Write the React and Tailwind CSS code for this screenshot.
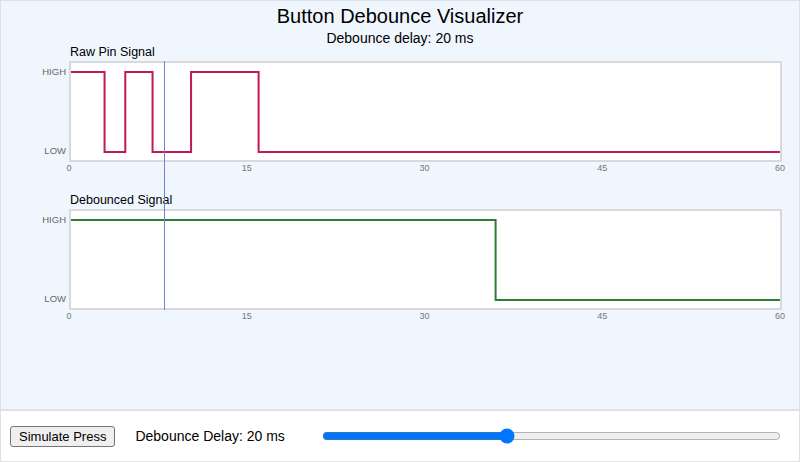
import { useState } from "react";

const PLOT_W = 711;
const PLOT_H = 101;
const HIGH_Y = 11;
const LOW_Y = 91;
const MAX_T = 60;

const toX = (t) => (t / MAX_T) * PLOT_W;

// raw pin edges (time in ms, level 1 = HIGH)
const rawEdges = [
  [0, 1],
  [3, 0],
  [4.75, 1],
  [7.05, 0],
  [10.3, 1],
  [16, 0],
];

const debouncedEdges = [
  [0, 1],
  [36, 0],
];

function stepPath(edges) {
  let d = "";
  let prevY = null;
  edges.forEach(([t, lvl], i) => {
    const x = toX(t);
    const y = lvl ? HIGH_Y : LOW_Y;
    if (i === 0) d += `M ${x} ${y}`;
    else d += ` L ${x} ${prevY} L ${x} ${y}`;
    prevY = y;
  });
  d += ` L ${PLOT_W} ${prevY}`;
  return d;
}

function SignalChart({ title, edges, color, className = "" }) {
  const ticks = [0, 15, 30, 45, 60];
  return (
    <div className={className}>
      <div className="pl-[70px] text-[12.5px] leading-[14px] h-[14px] text-black">
        {title}
      </div>
      <div className="flex mt-[2px]">
        <div className="w-[69px] h-[101px] flex flex-col justify-between items-end pr-[3px] py-[5px] text-[9.5px] leading-[12px] text-[#666]">
          <span>HIGH</span>
          <span>LOW</span>
        </div>
        <div className="w-[713px] h-[101px] bg-white border-2 border-[#d9d9dc] relative overflow-hidden">
          <svg
            width={PLOT_W}
            height={PLOT_H}
            className="absolute left-[-2px] top-[-2px]"
          >
            <path d={stepPath(edges)} fill="none" stroke={color} strokeWidth="2" />
          </svg>
        </div>
      </div>
      <div className="ml-[69px] w-[711px] h-[12px] flex justify-between text-[9px] leading-[12px] text-[#777]">
        {ticks.map((t) => (
          <div key={t} className="w-0 flex justify-center">
            <span>{t}</span>
          </div>
        ))}
      </div>
    </div>
  );
}

export default function App() {
  const [delay, setDelay] = useState(20);
  const [marker] = useState(8);

  return (
    <div
      className="w-[800px] h-[462px] flex flex-col bg-white"
      style={{ fontFamily: '"Liberation Sans", Arial, sans-serif' }}
    >
      <main className="flex-1 bg-[#eff6fe] border border-[#dde1e6] pt-[3px]">
        <h1 className="text-center text-[20px] leading-[24px] text-black">
          Button Debounce Visualizer
        </h1>
        <p className="text-center text-[14px] leading-[14px] mt-[3px] text-black">
          Debounce delay: {delay} ms
        </p>

        <div className="relative -ml-px">
          <SignalChart title="Raw Pin Signal" edges={rawEdges} color="#c2185b" />
          <SignalChart
            title="Debounced Signal"
            edges={debouncedEdges}
            color="#2e7d32"
            className="mt-[19px]"
          />
          {/* current time cursor */}
          <div
            className="absolute top-[16px] bottom-[12px] w-px bg-[#6f7fe0]"
            style={{ left: 69 + toX(marker) }}
          />
        </div>
      </main>

      <footer className="h-[52px] bg-white border border-[#dde1e6] flex items-center pl-[9px]">
        <button className="h-[21px] px-[8px] bg-[#efefef] border border-[#767676] rounded-[3px] text-[13px] leading-[15px] text-black">
          Simulate Press
        </button>
        <span className="ml-[20px] text-[14px] text-black">
          Debounce Delay: {delay} ms
        </span>
        <input
          type="range"
          min="0"
          max="50"
          value={delay}
          onChange={(e) => setDelay(Number(e.target.value))}
          className="ml-[37px] w-[459px]"
        />
      </footer>
    </div>
  );
}
